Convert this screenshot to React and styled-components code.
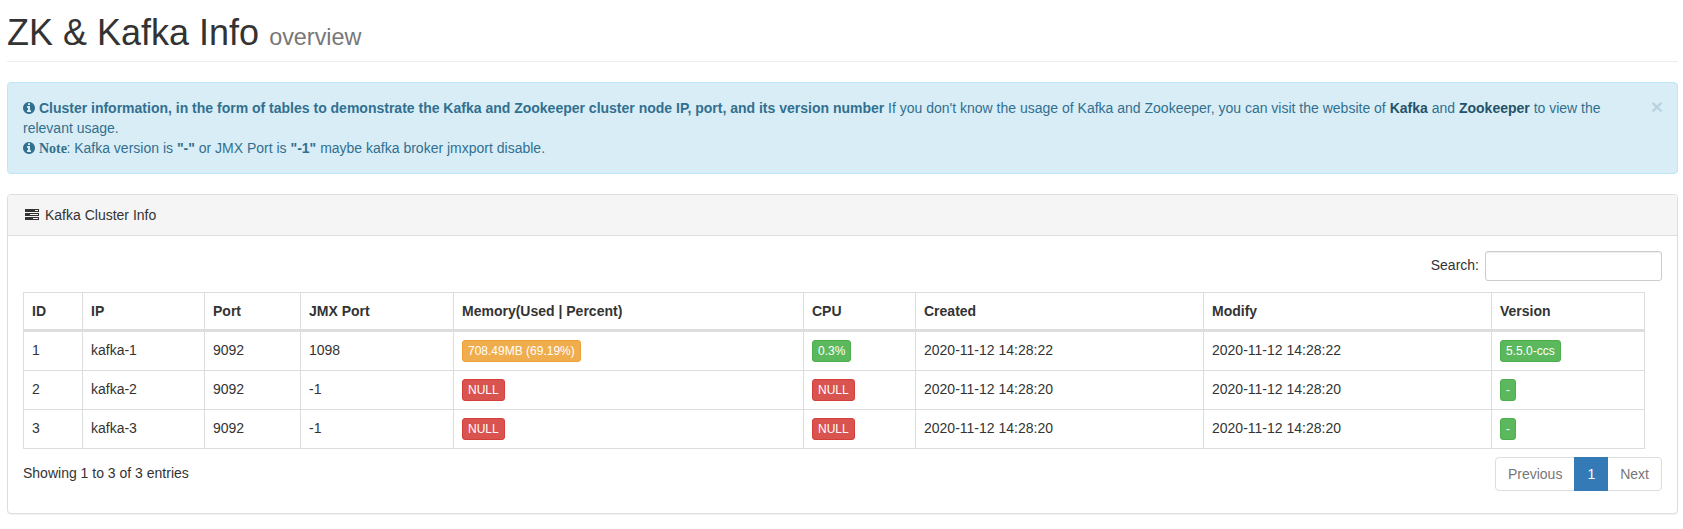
import React from "react";
import styled, { createGlobalStyle } from "styled-components";

const GlobalStyle = createGlobalStyle`
  *, *::before, *::after { box-sizing: border-box; }
  body {
    margin: 0;
    background: #fff;
    color: #333;
    font: 14px/20px "Liberation Sans", Arial, sans-serif;
  }
`;

const Page = styled.main`
  padding: 13px 5px 15px 7px;
`;

const PageHeader = styled.h1`
  margin: 0 0 20px;
  padding-bottom: 8px;
  border-bottom: 1px solid #eee;
  font-size: 36px;
  font-weight: 500;
  line-height: 40px;
`;

const Subtitle = styled.small`
  font-size: 23.4px;
  font-weight: 400;
  line-height: 1;
  color: #777;
`;

const Alert = styled.section`
  display: flex;
  align-items: flex-start;
  justify-content: space-between;
  margin-bottom: 20px;
  padding: 15px 14px 15px 15px;
  border: 1px solid #bce8f1;
  border-radius: 4px;
  background: #d9edf7;
  color: #31708f;
`;

const AlertText = styled.div`
  flex: 1;
  padding-right: 8px;
`;

const AlertLink = styled.a`
  font-weight: 700;
  color: #245269;
`;

const NoteLabel = styled.strong`
  margin-right: -0.5px;
  font-family: "Liberation Serif", serif;
  line-height: 1;
`;

const CloseButton = styled.button`
  margin: -2px 0 0;
  padding: 0;
  border: 0;
  background: transparent;
  color: inherit;
  font: 700 21px/21px "Liberation Sans", Arial, sans-serif;
  text-shadow: 0 1px 0 #fff;
  opacity: 0.2;
`;

const InfoSvg = styled.svg`
  display: inline-block;
  width: 12px;
  height: 14px;
  vertical-align: -2px;
  fill: currentColor;
`;

const TasksSvg = styled.svg`
  width: 14px;
  height: 14px;
  margin: 0 6px 0 2px;
  fill: currentColor;
`;

const Panel = styled.section`
  border: 1px solid #ddd;
  border-radius: 4px;
  background: #fff;
  box-shadow: 0 1px 1px rgba(0, 0, 0, 0.05);
`;

const PanelHeading = styled.header`
  display: flex;
  align-items: center;
  padding: 10px 15px;
  border-bottom: 1px solid #ddd;
  border-radius: 3px 3px 0 0;
  background: #f5f5f5;
`;

const PanelBody = styled.div`
  padding: 15px 15px 22px;
`;

const SearchBar = styled.label`
  display: flex;
  justify-content: flex-end;
  align-items: center;
  gap: 6px;
  margin-bottom: 11px;
  line-height: 30px;
`;

const SearchLabel = styled.span`
  position: relative;
  top: -1px;
`;

const SearchInput = styled.input`
  width: 177px;
  height: 30px;
  padding: 5px 10px;
  border: 1px solid #ccc;
  border-radius: 3px;
  background: #fff;
  font: 12px/18px "Liberation Sans", Arial, sans-serif;
  box-shadow: inset 0 1px 1px rgba(0, 0, 0, 0.075);
`;

const Table = styled.table`
  width: 1622px;
  table-layout: fixed;
  border: 1px solid #ddd;
  border-collapse: separate;
  border-spacing: 0;
`;

const HeadCell = styled.th`
  padding: 8px;
  border-right: 1px solid #ddd;
  border-bottom: 2px solid #ddd;
  text-align: left;
  &:last-child { border-right: 0; }
`;

const Cell = styled.td`
  height: 39px;
  padding: 8px;
  border-top: 1px solid #ddd;
  border-right: 1px solid #ddd;
  vertical-align: top;
  &:last-child { border-right: 0; }
`;

const tones = {
  warning: ["#f0ad4e", "#eea236"],
  success: ["#5cb85c", "#4cae4c"],
  danger: ["#d9534f", "#d43f3a"],
};

const Tag = styled.span`
  display: block;
  width: fit-content;
  padding: 1px 5px;
  border: 1px solid ${({ $tone }) => tones[$tone][1]};
  border-radius: 3px;
  background: ${({ $tone }) => tones[$tone][0]};
  color: #fff;
  font-size: 12px;
  line-height: 18px;
`;

const TableFooter = styled.footer`
  display: flex;
  justify-content: space-between;
  align-items: flex-start;
  padding-top: 8px;
`;

const EntryCount = styled.div`
  padding-top: 6px;
`;

const Pagination = styled.nav`
  display: flex;
`;

const PageLink = styled.a`
  padding: 6px 12px;
  margin-left: -1px;
  border: 1px solid ${({ $active }) => ($active ? "#337ab7" : "#ddd")};
  background: ${({ $active }) => ($active ? "#337ab7" : "#fff")};
  color: ${({ $active }) => ($active ? "#fff" : "#777")};
  z-index: ${({ $active }) => ($active ? 1 : 0)};
  &:first-child { border-radius: 4px 0 0 4px; }
  &:last-child { border-radius: 0 4px 4px 0; }
`;

const InfoIcon = () => (
  <InfoSvg viewBox="128 0 1536 1792" aria-hidden="true">
    <path d="M1152 1376v-160q0-14-9-23t-23-9h-96v-512q0-14-9-23t-23-9h-320q-14 0-23 9t-9 23v160q0 14 9 23t23 9h96v320h-96q-14 0-23 9t-9 23v160q0 14 9 23t23 9h448q14 0 23-9t9-23zm-128-896v-160q0-14-9-23t-23-9h-192q-14 0-23 9t-9 23v160q0 14 9 23t23 9h192q14 0 23-9t9-23zm640 416q0 209-103 385.5t-279.5 279.5-385.5 103-385.5-103-279.5-279.5-103-385.5 103-385.5 279.5-279.5 385.5-103 385.5 103 279.5 279.5 103 385.5z" />
  </InfoSvg>
);

const TasksIcon = () => (
  <TasksSvg viewBox="0 0 14 14" aria-hidden="true">
    <path
      fillRule="evenodd"
      d="M0 1h14v3H0zM10 2v1h3V2zM0 5h14v3H0zM5 6v1h8V6zM0 9h14v3H0zM8 10v1h5v-1z"
    />
  </TasksSvg>
);

const columns = [
  ["ID", 59],
  ["IP", 122],
  ["Port", 96],
  ["JMX Port", 153],
  ["Memory(Used | Percent)", 350],
  ["CPU", 112],
  ["Created", 288],
  ["Modify", 288],
  ["Version", 152],
];

const brokers = [
  { id: 1, ip: "kafka-1", port: 9092, jmx: "1098", memory: ["708.49MB (69.19%)", "warning"], cpu: ["0.3%", "success"], time: "2020-11-12 14:28:22", version: "5.5.0-ccs" },
  { id: 2, ip: "kafka-2", port: 9092, jmx: "-1", memory: ["NULL", "danger"], cpu: ["NULL", "danger"], time: "2020-11-12 14:28:20", version: "-" },
  { id: 3, ip: "kafka-3", port: 9092, jmx: "-1", memory: ["NULL", "danger"], cpu: ["NULL", "danger"], time: "2020-11-12 14:28:20", version: "-" },
];

export default function App() {
  return (
    <Page>
      <GlobalStyle />
      <PageHeader>
        ZK &amp; Kafka Info <Subtitle>overview</Subtitle>
      </PageHeader>
      <Alert>
        <AlertText>
          <InfoIcon />{" "}
          <strong>
            Cluster information, in the form of tables to demonstrate the Kafka and Zookeeper cluster node IP, port, and its version number
          </strong>{" "}
          If you don't know the usage of Kafka and Zookeeper, you can visit the website of{" "}
          <AlertLink>Kafka</AlertLink> and <AlertLink>Zookeeper</AlertLink> to view the relevant usage.
          <br />
          <InfoIcon /> <NoteLabel>Note</NoteLabel>: Kafka version is <strong>"-"</strong> or JMX Port is{" "}
          <strong>"-1"</strong> maybe kafka broker jmxport disable.
        </AlertText>
        <CloseButton aria-label="Close">×</CloseButton>
      </Alert>
      <Panel>
        <PanelHeading>
          <TasksIcon />
          Kafka Cluster Info
        </PanelHeading>
        <PanelBody>
          <SearchBar>
            <SearchLabel>Search:</SearchLabel>
            <SearchInput type="search" />
          </SearchBar>
          <Table>
            <colgroup>
              {columns.map(([name, width]) => (
                <col key={name} width={width} />
              ))}
            </colgroup>
            <thead>
              <tr>
                {columns.map(([name]) => (
                  <HeadCell key={name}>{name}</HeadCell>
                ))}
              </tr>
            </thead>
            <tbody>
              {brokers.map((b) => (
                <tr key={b.id}>
                  <Cell>{b.id}</Cell>
                  <Cell>{b.ip}</Cell>
                  <Cell>{b.port}</Cell>
                  <Cell>{b.jmx}</Cell>
                  <Cell><Tag $tone={b.memory[1]}>{b.memory[0]}</Tag></Cell>
                  <Cell><Tag $tone={b.cpu[1]}>{b.cpu[0]}</Tag></Cell>
                  <Cell>{b.time}</Cell>
                  <Cell>{b.time}</Cell>
                  <Cell><Tag $tone="success">{b.version}</Tag></Cell>
                </tr>
              ))}
            </tbody>
          </Table>
          <TableFooter>
            <EntryCount>Showing 1 to 3 of 3 entries</EntryCount>
            <Pagination>
              <PageLink>Previous</PageLink>
              <PageLink $active>1</PageLink>
              <PageLink>Next</PageLink>
            </Pagination>
          </TableFooter>
        </PanelBody>
      </Panel>
    </Page>
  );
}
